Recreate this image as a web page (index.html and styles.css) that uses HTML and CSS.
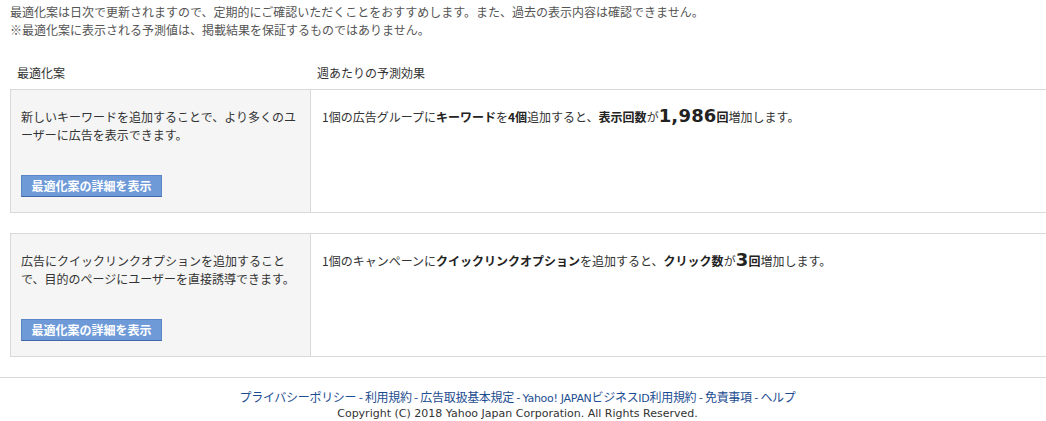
FILE: index.html
```html
<!DOCTYPE html>
<html lang="ja">
<head>
<meta charset="utf-8">
<title>最適化案</title>
<link rel="stylesheet" href="styles.css">
</head>
<body>
<div class="page">
  <p class="note">最適化案は日次で更新されますので、定期的にご確認いただくことをおすすめします。また、過去の表示内容は確認できません。<br>※最適化案に表示される予測値は、掲載結果を保証するものではありません。</p>

  <div class="head">
    <div class="head-left">最適化案</div>
    <div class="head-right">週あたりの予測効果</div>
  </div>

  <div class="row">
    <div class="cell-left">
      <p class="desc">新しいキーワードを追加することで、より多くのユーザーに広告を表示できます。</p>
      <a class="btn" href="#">最適化案の詳細を表示</a>
    </div>
    <div class="cell-right">
      <p class="effect">1個の広告グループに<b>キーワード</b>を<b>4個</b>追加すると、<b>表示回数</b>が<b class="num">1,986</b><b>回</b>増加します。</p>
    </div>
  </div>

  <div class="row">
    <div class="cell-left">
      <p class="desc">広告にクイックリンクオプションを追加することで、目的のページにユーザーを直接誘導できます。</p>
      <a class="btn" href="#">最適化案の詳細を表示</a>
    </div>
    <div class="cell-right">
      <p class="effect">1個のキャンペーンに<b>クイックリンクオプション</b>を追加すると、<b>クリック数</b>が<b class="num">3</b><b>回</b>増加します。</p>
    </div>
  </div>
</div>

<footer class="footer">
  <p class="links"><a href="#">プライバシーポリシー</a> - <a href="#">利用規約</a> - <a href="#">広告取扱基本規定</a> - <a href="#"><span class="lat">Yahoo! JAPAN</span>ビジネス<span class="lat">ID</span>利用規約</a> - <a href="#">免責事項</a> - <a href="#">ヘルプ</a></p>
  <p class="copy">Copyright (C) 2018 Yahoo Japan Corporation. All Rights Reserved.</p>
</footer>
</body>
</html>
```

FILE: styles.css
```css
html, body {
  margin: 0;
  padding: 0;
  background: #fff;
  overflow-x: hidden;
}
body {
  font-family: "Noto Sans CJK JP", "Liberation Sans", sans-serif;
  font-size: 12px;
  line-height: 18px;
  color: #444;
}
.page {
  padding: 3px 0 0 10px;
}
p { margin: 0; }

.note {
  color: #555;
}

.head {
  display: flex;
  margin-top: 25px;
  padding-bottom: 7px;
  color: #333;
}
.head-left {
  width: 294px;
  padding-left: 7px;
}
.head-right {
  padding-left: 6px;
}

.row {
  display: flex;
  border-top: 1px solid #d9d9d9;
  border-bottom: 1px solid #d9d9d9;
  border-left: 1px solid #d9d9d9;
  margin-bottom: 20px;
}
.cell-left {
  width: 279px;
  flex: none;
  background: #f5f5f5;
  padding: 18px 10px 15px 10px;
  border-right: 1px solid #d9d9d9;
  color: #333;
}
.desc {
  margin-bottom: 31px;
}
.btn {
  display: inline-block;
  box-sizing: border-box;
  width: 141px;
  height: 22px;
  background: #6e9ad8;
  border: 1px solid #5a86c6;
  border-bottom-color: #3f68a8;
  color: #fff;
  font-weight: bold;
  text-align: center;
  line-height: 20px;
  font-size: 12px;
  text-decoration: none;
}
.cell-right {
  flex: 1;
  padding: 17px 11px;
  color: #333;
}
.effect b {
  color: #222;
}
.effect .num {
  font-family: "DejaVu Sans", "Liberation Sans", sans-serif;
  font-size: 18px;
  line-height: 18px;
  letter-spacing: 0.2px;
}

.footer {
  border-top: 1px solid #d9d9d9;
  margin-top: 0;
  padding: 11px 11px 0 0;
  text-align: center;
  line-height: 15px;
}
.links {
  font-size: 12px;
  letter-spacing: -0.3px;
  color: #1d4d91;
}
.links a {
  color: #1d4d91;
  text-decoration: none;
}
.lat {
  font-family: "DejaVu Sans", sans-serif;
  font-size: 11px;
  letter-spacing: -0.3px;
}
.copy {
  font-family: "DejaVu Sans", sans-serif;
  font-size: 11px;
  color: #333;
}
```
